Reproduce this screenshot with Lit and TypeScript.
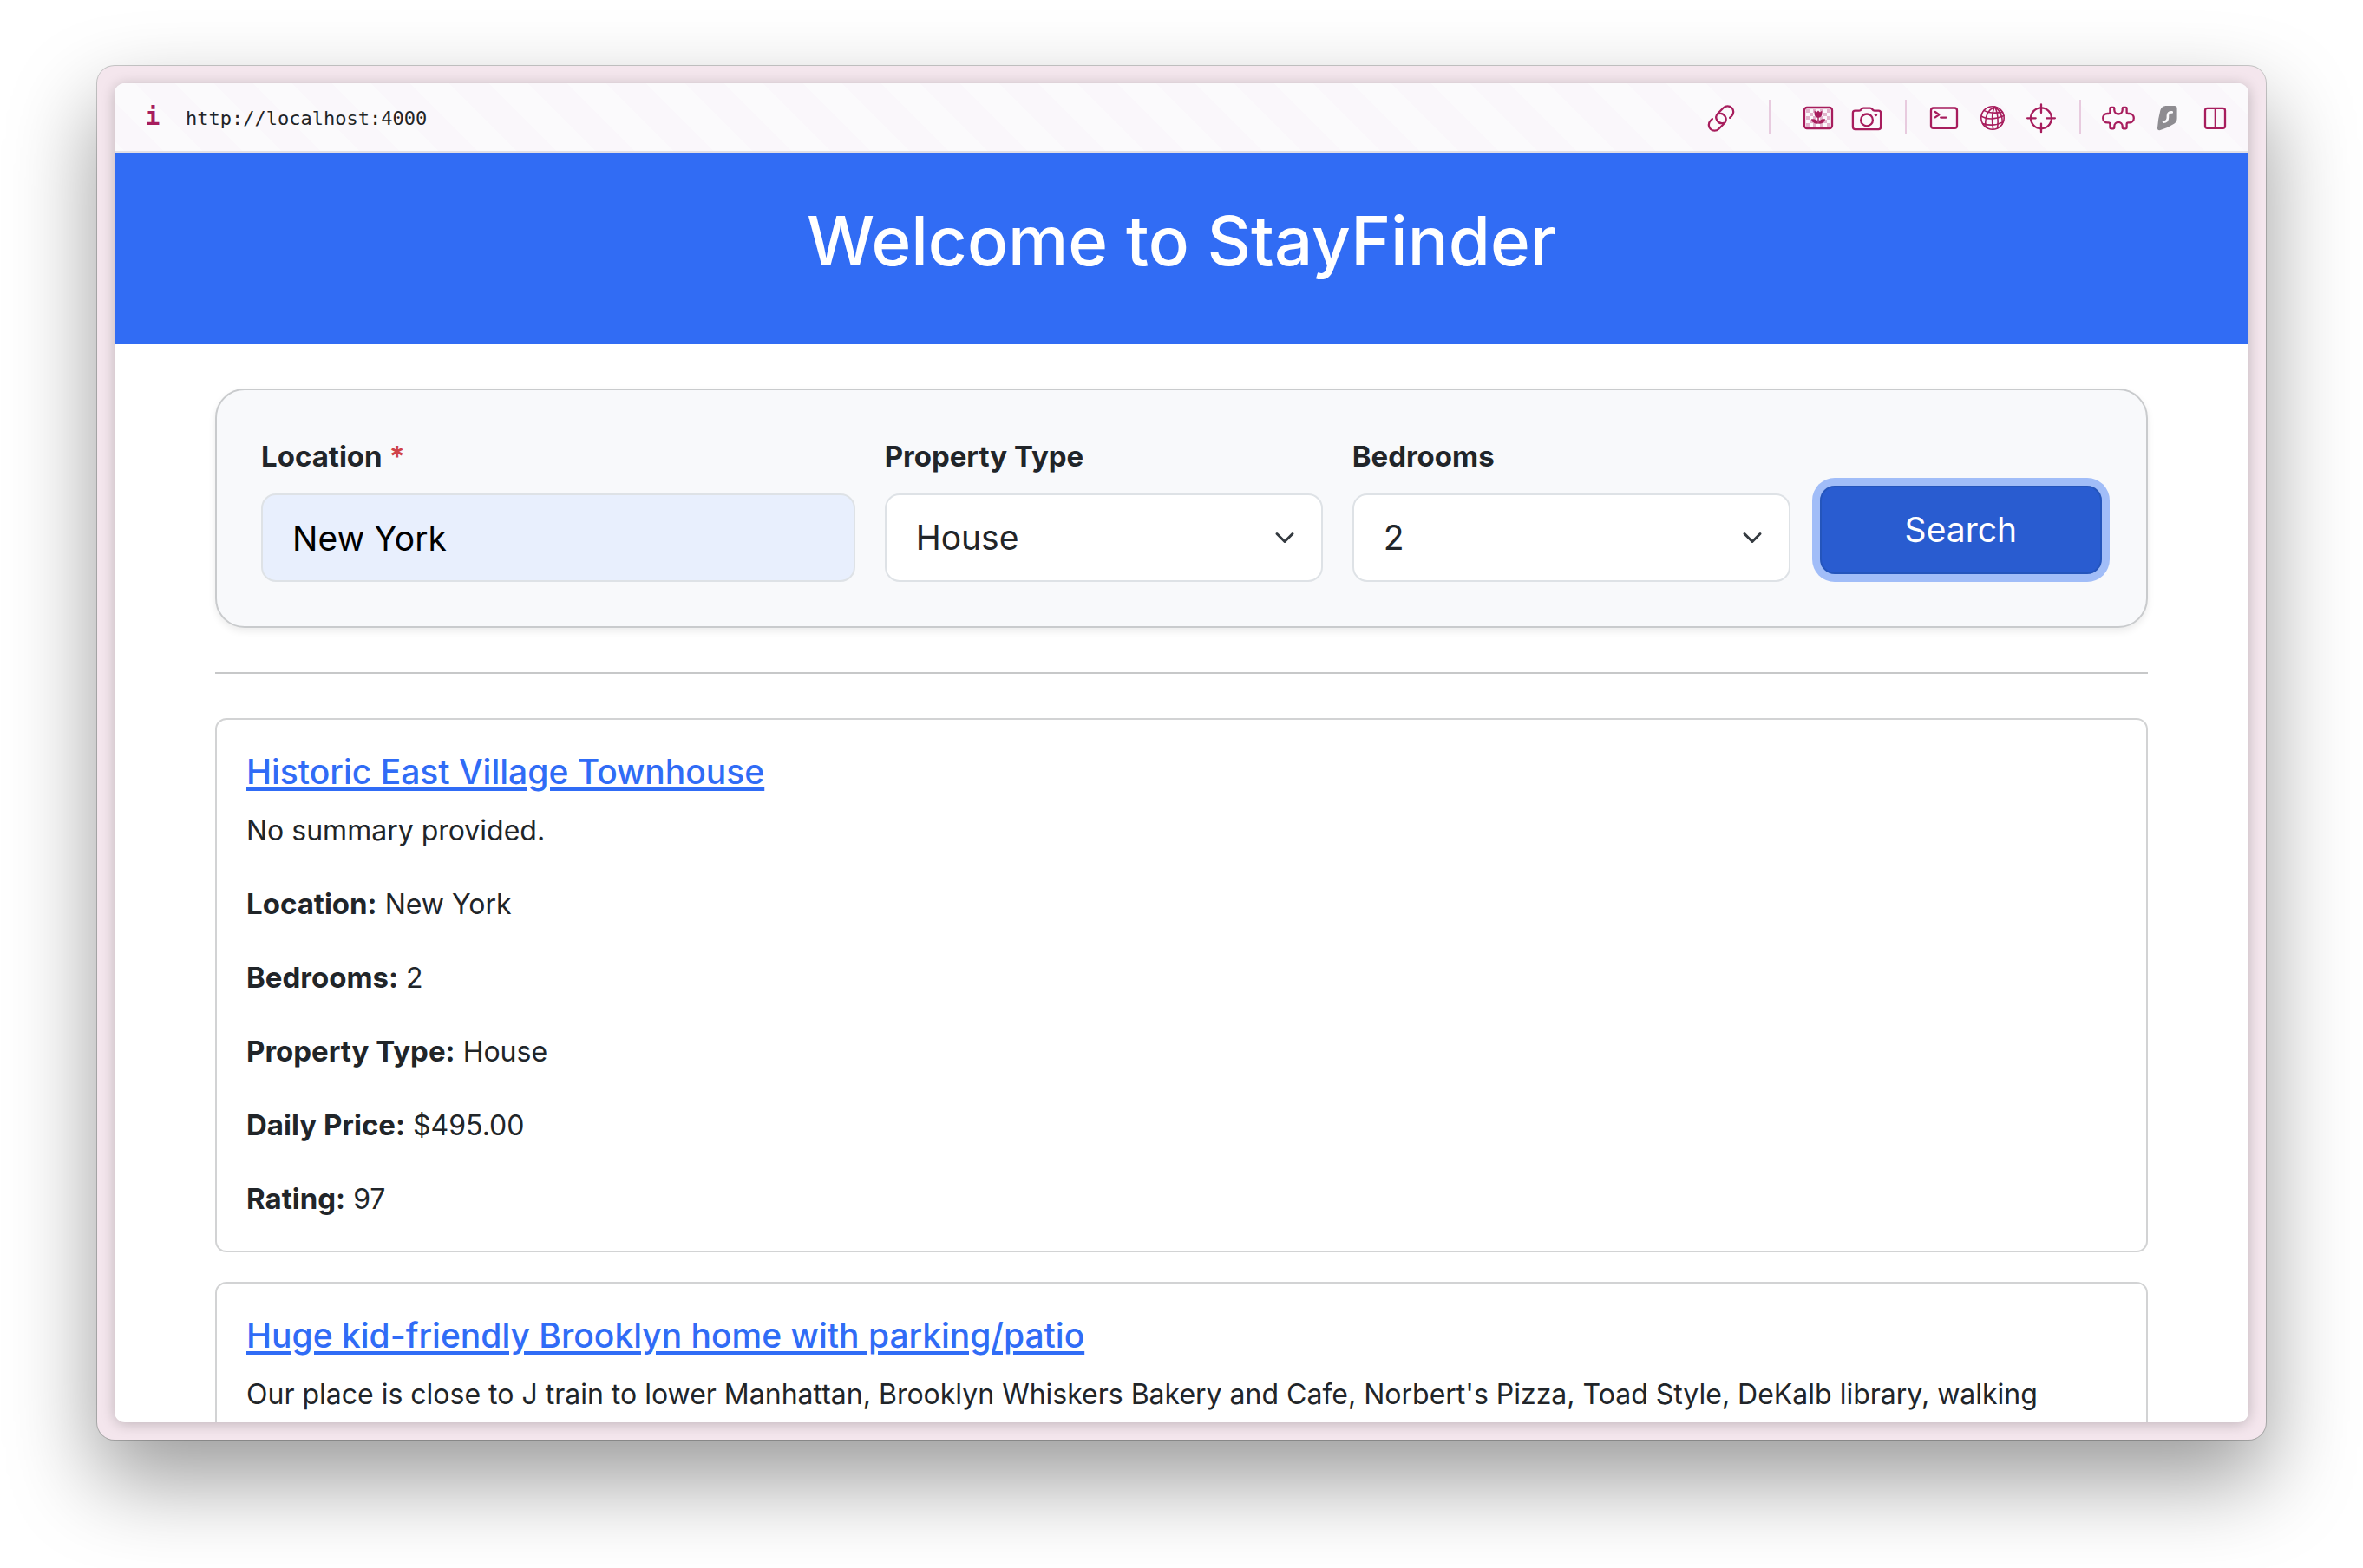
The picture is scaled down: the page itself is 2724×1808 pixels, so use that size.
import { LitElement, html, css, svg, nothing, type TemplateResult } from "lit";
import { customElement, property } from "lit/decorators.js";
import { classMap } from "lit/directives/class-map.js";

interface Listing {
  title: string;
  summary: string;
  facts: [string, string][];
}

const listings: Listing[] = [
  {
    title: "Historic East Village Townhouse",
    summary: "No summary provided.",
    facts: [
      ["Location", "New York"],
      ["Bedrooms", "2"],
      ["Property Type", "House"],
      ["Daily Price", "$495.00"],
      ["Rating", "97"],
    ],
  },
  {
    title: "Huge kid-friendly Brooklyn home with parking/patio",
    summary:
      "Our place is close to J train to lower Manhattan, Brooklyn Whiskers Bakery and Cafe, Norbert's Pizza, Toad Style, DeKalb library, walking",
    facts: [],
  },
];

const checkerCells: [number, number][] = [];
for (let row = 0; row < 5; row++) {
  for (let col = 0; col < 7; col++) {
    if ((row + col) % 2 === 0) checkerCells.push([6 + col * 4, 11 + row * 4]);
  }
}

const icons: Record<string, TemplateResult> = {
  link: svg`<g transform="translate(20 21.5) rotate(-45)">
      <path d="M7.6 6.7H10.6A6.7 6.7 0 0 0 10.6 -6.7H1.5A6.7 6.7 0 0 0 -1.6 5.9"/>
      <path d="M-7.6 -6.7H-10.6A6.7 6.7 0 0 0 -10.6 6.7H-1.5A6.7 6.7 0 0 0 1.6 -5.9"/>
    </g>`,
  picture: svg`<g class="tint">${checkerCells.map(
      ([x, y]) => svg`<rect x=${x} y=${y} width="4" height="4"/>`
    )}</g>
    <rect x="4" y="9" width="32" height="24" rx="3"/>
    <g class="solid">
      <path d="M15.6 12.6L18 14.6L20 12.4L22 14.6L24.4 12.6V16.6A4.4 4.2 0 0 1 15.6 16.6Z"/>
      <path d="M19.3 20H20.7V27.6H19.3Z"/>
      <path d="M12 22.3C16.5 21.8 19 23.6 19.8 27.6C15.6 28.2 12.6 26 12 22.3Z"/>
      <path d="M28 22.3C23.5 21.8 21 23.6 20.2 27.6C24.4 28.2 27.4 26 28 22.3Z"/>
    </g>`,
  camera: svg`<path d="M6.5 12.6H11.2C12.4 12.6 13 12.2 13.6 11.2C14.3 10 15 9.6 16.2 9.6H23.8C25 9.6 25.7 10 26.4 11.2C27 12.2 27.6 12.6 28.8 12.6H33.5A2.6 2.6 0 0 1 36.1 15.2V31.6A2.6 2.6 0 0 1 33.5 34.2H6.5A2.6 2.6 0 0 1 3.9 31.6V15.2A2.6 2.6 0 0 1 6.5 12.6Z"/>
    <circle cx="20" cy="23.4" r="6.9"/>
    <circle class="solid" cx="30.4" cy="17.6" r="1.7"/>`,
  terminal: svg`<rect x="5" y="9.5" width="30" height="23.4" rx="2.8"/>
    <path d="M9.8 14L14.4 17.2L9.8 20.4M16.2 20.6H22.4"/>`,
  globe: svg`<g class="fine"><circle cx="20" cy="21" r="13.2"/>
    <path d="M22.5 8C13.5 12.5 10.5 20 12.2 31.5M22.5 8C19.5 14 18.5 22 20.6 34M22.5 8C25.5 14 27 22 25.6 32.8M22.5 8C29.5 13 31.8 19 31.2 28"/>
    <path d="M10 12.4C16 15.6 24 15.6 31.6 14.4M7 19C14 23 24 22.4 33 18.6M8.5 27.4C16 30 25 29.4 32.2 25.6"/></g>`,
  target: svg`<circle cx="20" cy="21.3" r="12"/>
    <path d="M20 5.4V15M20 27.6V37.2M4.1 21.3H13.7M26.3 21.3H35.9"/>`,
  puzzle: svg`<path d="M10.4 9.9Q10.4 8.9 11.4 8.9H14.3Q15.3 8.9 15.3 9.9V11.8A4.7 4.7 0 0 0 24.7 11.8V9.9Q24.7 8.9 25.7 8.9H28.6Q29.6 8.9 29.6 9.9V14.2Q29.6 16 31.4 16H32.6A5.2 5.2 0 0 1 32.6 26.4H31.4Q29.6 26.4 29.6 28.2V32.3Q29.6 33.3 28.6 33.3H25.7Q24.7 33.3 24.7 32.3V30.6A4.7 4.7 0 0 0 15.3 30.6V32.3Q15.3 33.3 14.3 33.3H11.4Q10.4 33.3 10.4 32.3V28.2Q10.4 26.4 8.6 26.4H7.4A5.2 5.2 0 0 1 7.4 16H8.6Q10.4 16 10.4 14.2Z"/>`,
  shield: svg`<path class="gray" d="M18.5 7H28.6Q31.6 7 31.6 10V21.6Q31.6 25.6 28.2 27.8Q21 32.6 12.4 35Q8.8 35.8 9 32.4Q9.8 21.6 12.4 12Q13.8 7.4 18.5 7Z"/>
    <path class="white" d="M25.8 14.4Q20.9 14 20.9 18.6V20.6Q20.9 25.6 16 25.6"/>`,
  columns: svg`<rect x="8" y="9.9" width="23" height="23" rx="2.6"/><path class="fine" d="M19.5 10V33"/>`,
};

const toolGroups: [string, string][][] = [
  [["link", "Copy link"]],
  [["picture", "Images"], ["camera", "Capture page"]],
  [["terminal", "Console"], ["globe", "Network"], ["target", "Inspect"]],
  [["puzzle", "Extensions"], ["shield", "Shield"], ["columns", "Split view"]],
];

@customElement("browser-bar")
export class BrowserBar extends LitElement {
  static styles = css`
    :host {
      display: flex;
      align-items: center;
      height: 78px;
      flex: none;
      padding: 0 18px 0 24px;
      color: #a71d5d;
      border-bottom: 2px solid #e2dfe5;
      background: repeating-linear-gradient(45deg, #fbfafc 0 8px, #faf7fb 8px 40px, #fbfafc 40px 64px);
    }
    button {
      display: block;
      width: 40px;
      height: 40px;
      padding: 0;
      border: 0;
      background: none;
      color: inherit;
    }
    .info {
      font: bold 28px/40px "DejaVu Sans Mono", monospace;
    }
    .address {
      flex: 1;
      min-width: 0;
      margin: 0 18px;
      padding: 4px 0 0;
      border: 0;
      outline: 0;
      background: none;
      color: #222426;
      font: 22px/40px "DejaVu Sans Mono", monospace;
    }
    .tools,
    .group {
      display: flex;
      align-items: center;
    }
    .group {
      gap: 16px;
    }
    .rule {
      width: 2px;
      height: 40px;
      margin: 0 23px 0 24px;
      background: #e8cbdf;
    }
    .rule.wide {
      margin: 0 35px;
    }
    svg {
      display: block;
      width: 40px;
      height: 40px;
      fill: none;
      stroke: currentColor;
      stroke-width: 2.3;
      stroke-linecap: round;
      stroke-linejoin: round;
    }
    .tint {
      fill: #e2b4cd;
      stroke: none;
    }
    .solid {
      fill: currentColor;
      stroke: none;
    }
    .fine {
      stroke-width: 1.6;
    }
    .gray {
      fill: #8e8c91;
      stroke: none;
    }
    .white {
      stroke: #fbfafc;
      stroke-width: 2.6;
    }
  `;

  render() {
    return html`
      <button class="info" aria-label="Page information">i</button>
      <input class="address" aria-label="Address" value="http://localhost:4000" />
      <div class="tools">
        ${toolGroups.map(
          (group, index) => html`
            ${index ? html`<span class=${classMap({ rule: true, wide: index === 1 })}></span>` : nothing}
            <div class="group">
              ${group.map(
                ([name, label]) => html`<button aria-label=${label}>
                  <svg viewBox="0 0 40 40" aria-hidden="true">${icons[name]}</svg>
                </button>`
              )}
            </div>
          `
        )}
      </div>
    `;
  }
}

@customElement("search-form")
export class SearchForm extends LitElement {
  static styles = css`
    :host {
      display: block;
    }
    * {
      box-sizing: border-box;
    }
    .form {
      display: grid;
      grid-template-columns: repeat(12, minmax(0, 1fr));
      gap: 34px;
      align-items: end;
      padding: 51px;
      border: 2px solid #c9cbcd;
      border-radius: 34px;
      background: #f8f9fb;
      box-shadow: 0 4px 9px rgba(0, 0, 0, 0.08);
    }
    .field {
      display: grid;
      grid-column: span 3;
      grid-template-columns: minmax(0, 1fr);
    }
    .field.location {
      grid-column: span 4;
    }
    label {
      margin-bottom: 17px;
      font-size: 33px;
      line-height: 51px;
      font-weight: 700;
    }
    .required {
      color: #d04349;
    }
    .control {
      width: 100%;
      height: 102px;
      margin: 0;
      padding: 0 34px;
      border: 2px solid #dee2e6;
      border-radius: 17px;
      outline: 0;
      appearance: none;
      background: #fff;
      color: #212529;
      font: 400 39px/64px Inter, sans-serif;
    }
    .control.filled {
      background: #e8effd;
      color: #000;
    }
    .select {
      display: grid;
      grid-template-columns: minmax(0, 1fr) 26px;
      align-items: center;
    }
    .select .control {
      grid-area: 1 / 1 / 2 / 3;
    }
    .chevron {
      grid-area: 1 / 2;
      justify-self: end;
      width: 26px;
      height: 26px;
      margin-right: 31px;
      overflow: visible;
      fill: none;
      stroke: #343a40;
      stroke-width: 3;
      stroke-linecap: round;
      stroke-linejoin: round;
      pointer-events: none;
    }
    button {
      grid-column: span 2;
      height: 102px;
      margin-bottom: 9px;
      border: 2px solid #2455bc;
      border-radius: 17px;
      background: #295cd0;
      color: #fff;
      font: 400 39px/64px Inter, sans-serif;
      box-shadow: 0 0 0 9px #a1bdf8;
    }
  `;

  private select(id: string, label: string, value: string) {
    return html`<div class="field">
      <label for=${id}>${label}</label>
      <div class="select">
        <select class="control" id=${id}>
          <option selected>${value}</option>
        </select>
        <svg class="chevron" viewBox="0 0 26 26" aria-hidden="true"><path d="M4 8.5L13 17.5L22 8.5" /></svg>
      </div>
    </div>`;
  }

  render() {
    return html`<form class="form" @submit=${(e: Event) => e.preventDefault()}>
      <div class="field location">
        <label for="location">Location <span class="required">*</span></label>
        <input class="control filled" id="location" value="New York" />
      </div>
      ${this.select("type", "Property Type", "House")} ${this.select("bedrooms", "Bedrooms", "2")}
      <button type="submit">Search</button>
    </form>`;
  }
}

@customElement("listing-card")
export class ListingCard extends LitElement {
  @property({ attribute: false }) listing!: Listing;

  static styles = css`
    :host {
      display: block;
      padding: 34px;
      border: 2px solid #d2d3d4;
      border-radius: 13px;
      background: #fff;
    }
    h2 {
      margin: 0 0 17px;
      font-size: 39px;
      line-height: 51px;
      font-weight: 500;
    }
    a {
      color: #306cf6;
      text-decoration: underline;
      text-decoration-thickness: 4px;
      text-underline-offset: 4px;
    }
    p {
      margin: 0 0 34px;
      font-size: 32px;
      line-height: 51px;
    }
    p:last-child {
      margin-bottom: 0;
    }
    strong {
      font-size: 33px;
      font-weight: 700;
    }
  `;

  render() {
    const { title, summary, facts } = this.listing;
    return html`
      <h2><a href="#">${title}</a></h2>
      <p>${summary}</p>
      ${facts.map(([name, value]) => html`<p><strong>${name}:</strong> ${value}</p>`)}
    `;
  }
}

@customElement("app-root")
export class AppRoot extends LitElement {
  static styles = css`
    :host {
      display: flex;
      box-sizing: border-box;
      height: 100vh;
      padding: 76px 112px 148px;
      overflow: hidden;
      background: #fff;
      color: #212529;
      font-family: Inter, sans-serif;
    }
    .window {
      display: flex;
      flex: 1;
      min-width: 0;
      padding: 20px;
      border-radius: 20px;
      background: #f4e6ed;
      box-shadow: 0 0 0 1px rgba(0, 0, 0, 0.2), 0 46px 100px rgba(0, 0, 0, 0.4);
    }
    .view {
      display: flex;
      flex: 1;
      flex-direction: column;
      min-width: 0;
      overflow: hidden;
      border-radius: 12px;
      background: #fff;
      box-shadow: 0 2px 16px rgba(0, 0, 0, 0.22);
    }
    .banner {
      flex: none;
      padding: 51px;
      background: #316cf4;
      color: #fff;
      text-align: center;
    }
    h1 {
      margin: 0 0 17px;
      font-size: 78px;
      line-height: 102px;
      font-weight: 500;
    }
    main {
      padding: 51px 116px;
    }
    hr {
      height: 2px;
      margin: 51px 0;
      border: 0;
      background: #c7c8c9;
    }
    .results {
      display: grid;
      gap: 34px;
    }
  `;

  render() {
    return html`<div class="window">
      <div class="view">
        <browser-bar></browser-bar>
        <header class="banner"><h1>Welcome to StayFinder</h1></header>
        <main>
          <search-form></search-form>
          <hr />
          <section class="results">
            ${listings.map((listing) => html`<listing-card .listing=${listing}></listing-card>`)}
          </section>
        </main>
      </div>
    </div>`;
  }
}
